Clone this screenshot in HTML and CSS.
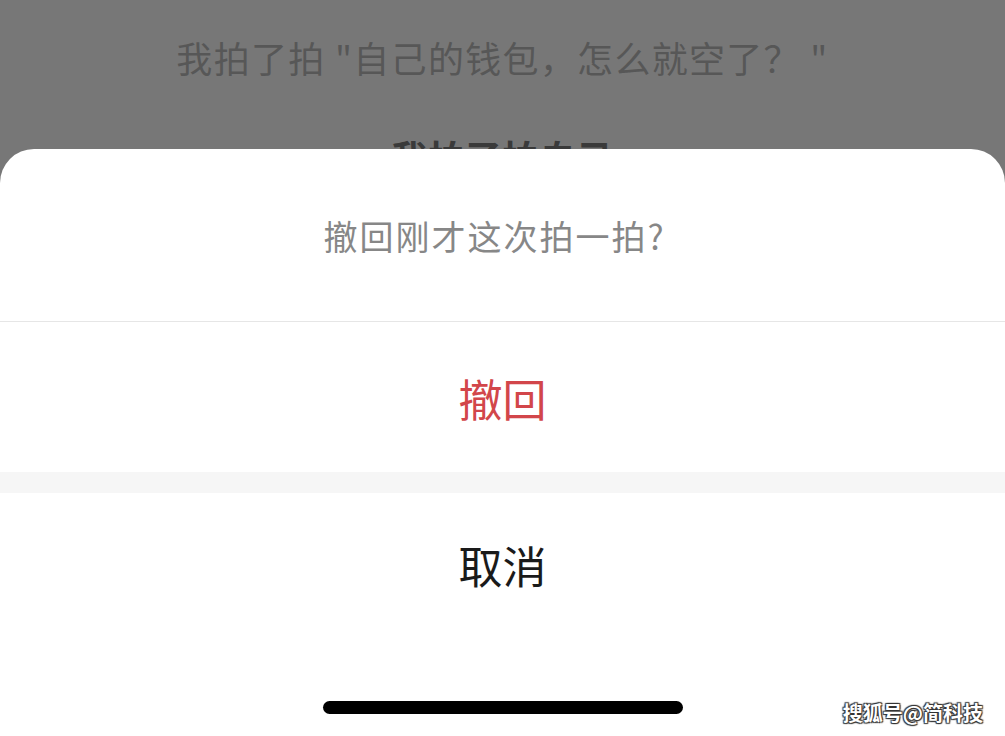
FILE: index.html
```html
<html>
  <head>
    <title>撤回拍一拍</title>
    <link rel="stylesheet" href="styles.css">
  </head>
  <body>
    <div class="screen">
      <div class="chat">
        <p class="pat">我拍了拍 "自己的钱包，怎么就空了？ "</p>
        <p class="pat self">我拍了拍自己</p>
      </div>

      <div class="sheet">
        <div class="sheet-title">撤回刚才这次拍一拍?</div>
        <div class="sheet-action danger">撤回</div>
        <div class="sheet-gap"></div>
        <div class="sheet-action cancel">取消</div>
        <div class="home-bar"></div>
      </div>

      <div class="watermark">搜狐号@简科技</div>
    </div>
  </body>
</html>
```

FILE: styles.css
```css
body {
  margin: 0;
  padding: 0;
  background: #777777;
  font-family: "Noto Sans CJK SC", "Noto Sans", sans-serif;
}

.screen {
  position: relative;
  width: 1005px;
  height: 736px;
  overflow: hidden;
  display: flex;
  flex-direction: column;
}

.chat {
  height: 149px;
  display: flex;
  flex-direction: column;
  align-items: center;
}

.pat {
  margin: 0;
  font-size: 36px;
  line-height: 50px;
  letter-spacing: 1.3px;
  color: #575757;
  white-space: nowrap;
}

.pat:first-child {
  margin-top: 32px;
}

.self {
  margin-top: 49px;
  font-weight: bold;
  letter-spacing: 1px;
  color: #3a3a3a;
}

.sheet {
  position: relative;
  z-index: 2;
  flex: 1;
  background: #ffffff;
  border-radius: 34px 34px 0 0;
  display: flex;
  flex-direction: column;
  align-items: stretch;
}

.sheet-title {
  height: 173px;
  box-sizing: border-box;
  padding-top: 62px;
  padding-right: 16px;
  text-align: center;
  font-size: 34px;
  line-height: 50px;
  letter-spacing: 2px;
  color: #878787;
  border-bottom: 1px solid #e6e6e6;
}

.sheet-action {
  text-align: center;
  font-size: 44px;
  line-height: 60px;
}

.danger {
  height: 150px;
  box-sizing: border-box;
  padding-top: 46px;
  color: #d2464a;
}

.sheet-gap {
  height: 21px;
  background: #f6f6f6;
}

.cancel {
  height: 206px;
  box-sizing: border-box;
  padding-top: 42px;
  color: #1a1a1a;
}

.home-bar {
  position: absolute;
  left: 323px;
  top: 552px;
  width: 360px;
  height: 13px;
  border-radius: 7px;
  background: #000000;
}

.watermark {
  position: absolute;
  z-index: 3;
  right: 22px;
  bottom: 10px;
  font-size: 20px;
  font-weight: bold;
  line-height: 26px;
  color: #ffffff;
  text-shadow: 1px 1px 1px #333, -1px -1px 1px #333, 1px -1px 1px #333, -1px 1px 1px #333;
}
```
